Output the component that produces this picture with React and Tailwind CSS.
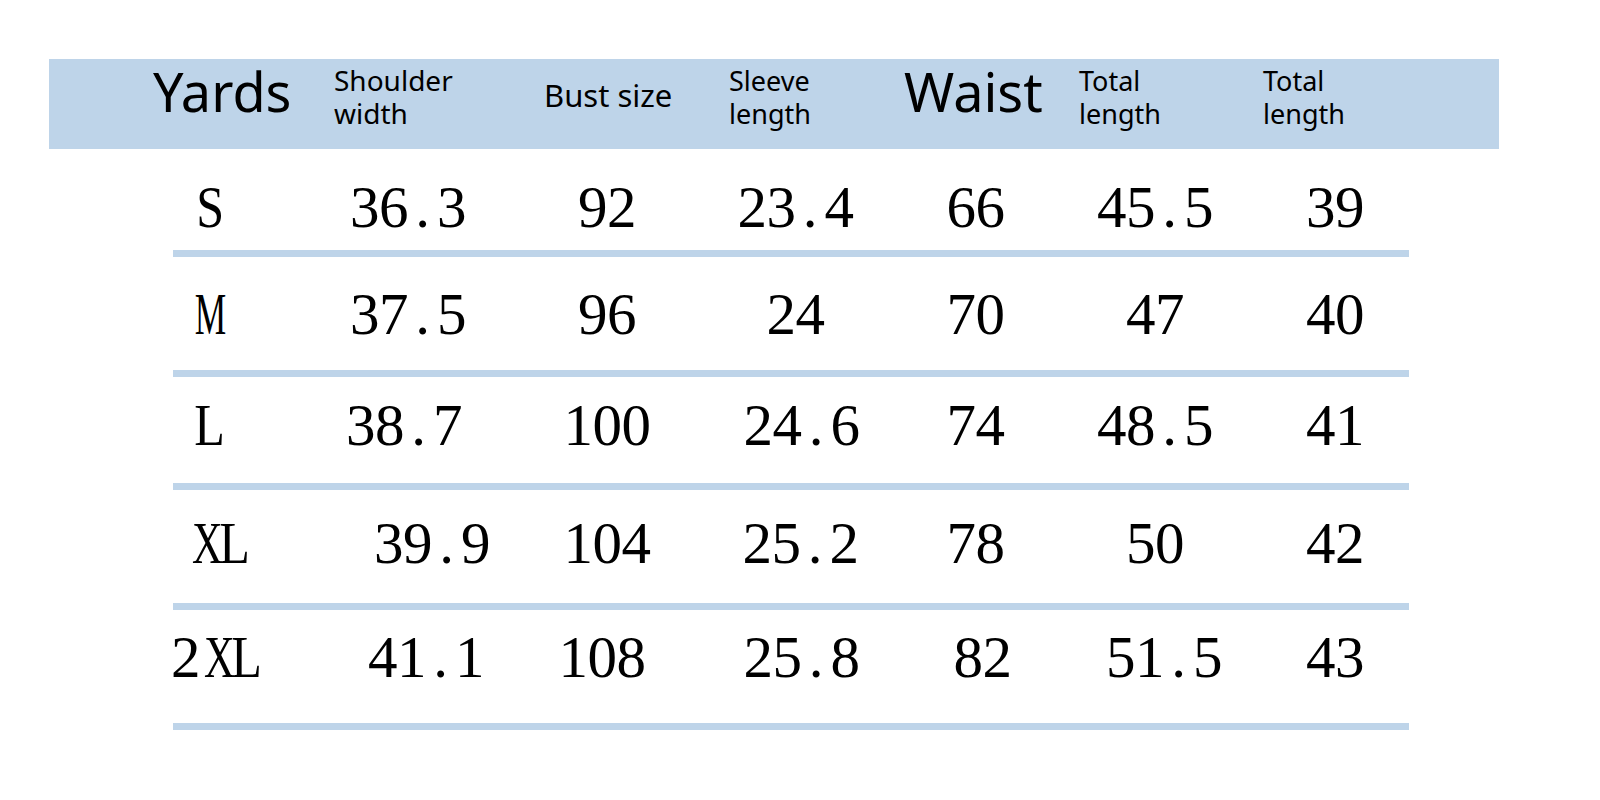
const sans = { fontFamily: '"Noto Sans", "Open Sans", sans-serif' };

const rows = [
  {
    size: "S",
    sizePad: "pl-[83px]",
    h: "h-[101px]",
    pt: "pt-[29px]",
    cells: [["36.3", ""], ["92", ""], ["23.4", ""], ["66", ""], ["45.5", ""], ["39", ""]],
  },
  {
    size: "M",
    sizePad: "pl-[78px]",
    h: "h-[113px]",
    pt: "pt-[28px]",
    cells: [["37.5", ""], ["96", ""], ["24", ""], ["70", ""], ["47", ""], ["40", ""]],
  },
  {
    size: "L",
    sizePad: "pl-[81px]",
    h: "h-[106px]",
    pt: "pt-[19px]",
    cells: [["38.7", "-translate-x-[4px]"], ["100", ""], ["24.6", "translate-x-[6px]"], ["74", ""], ["48.5", ""], ["41", ""]],
  },
  {
    size: "XL",
    sizePad: "pl-[77px]",
    h: "h-[113px]",
    pt: "pt-[24px]",
    cells: [["39.9", "translate-x-[24px]"], ["104", ""], ["25.2", "translate-x-[5px]"], ["78", ""], ["50", ""], ["42", ""]],
  },
  {
    size: "2XL",
    sizePad: "pl-[60px]",
    h: "h-[113px]",
    pt: "pt-[18px]",
    cells: [["41.1", "translate-x-[18px]"], ["108", "-translate-x-[5px]"], ["25.8", "translate-x-[6px]"], ["82", "translate-x-[7px]"], ["51.5", "translate-x-[9px]"], ["43", ""]],
  },
];

const colWidths = ["w-[202px]", "w-[196px]", "w-[181px]", "w-[179px]", "w-[180px]", "w-[180px]"];

// letters squeezed to the half-width cell of the digits
const squeeze = {
  S: "scale-x-[0.85]",
  M: "scale-x-[0.6]",
  L: "scale-x-[0.85]",
  X: "scale-x-[0.72]",
};

// half-width chars of a Song-style font all take the same advance
function Mono({ text }) {
  return (
    <span className="inline-flex">
      {text.split("").map((ch, i) => (
        <span key={i} className={`inline-block w-[29px] text-center ${squeeze[ch] || ""}`}>
          {ch}
        </span>
      ))}
    </span>
  );
}

export default function App() {
  return (
    <div className="min-h-screen w-full bg-white pt-[59px] text-black">
      {/* Header band */}
      <div
        className="ml-[49px] w-[1450px] h-[90px] bg-[#bed4e9] flex items-start pl-[104px]"
        style={sans}
      >
        <div className="w-[181px] pt-[5px] text-[54px] leading-none">Yards</div>
        <div className="w-[210px] pt-[5px] text-[28px] leading-[33px]">
          Shoulder
          <br />
          width
        </div>
        <div className="w-[185px] pt-[21px] text-[31px] leading-none">Bust size</div>
        <div className="w-[175px] pt-[5px] text-[27px] leading-[33px]">
          Sleeve
          <br />
          length
        </div>
        <div className="w-[175px] pt-[5px] text-[54px] leading-none">Waist</div>
        <div className="w-[184px] pt-[5px] text-[27px] leading-[33px]">
          Total
          <br />
          length
        </div>
        <div className="pt-[5px] text-[27px] leading-[33px]">
          Total
          <br />
          length
        </div>
      </div>

      {/* Size rows */}
      {rows.map((r) => (
        <div key={r.size}>
          <div
            className={`${r.h} ${r.pt} flex items-start pl-[111px] text-[59px] leading-none`}
            style={{ fontFamily: '"Liberation Serif", "DejaVu Serif", serif' }}
          >
            <div className={`w-[196px] ${r.sizePad}`}>
              <Mono text={r.size} />
            </div>
            {r.cells.map(([v, shift], i) => (
              <div key={i} className={`${colWidths[i]} flex justify-center`}>
                <span className={`inline-block ${shift}`}>
                  <Mono text={v} />
                </span>
              </div>
            ))}
          </div>
          <div className="ml-[173px] w-[1236px] h-[7px] bg-[#bed4e9]" />
        </div>
      ))}
    </div>
  );
}
